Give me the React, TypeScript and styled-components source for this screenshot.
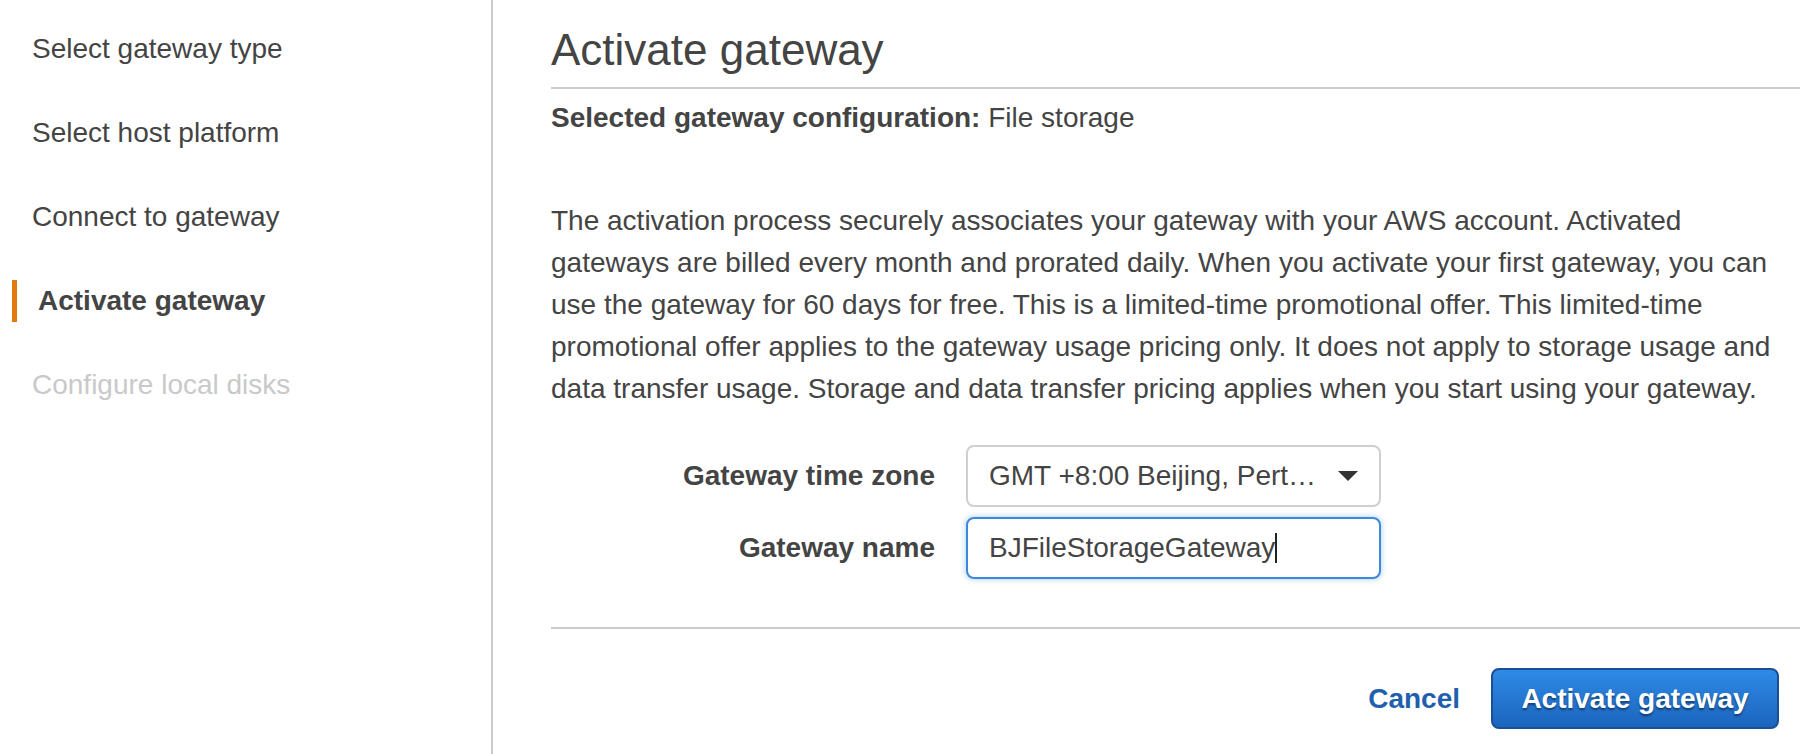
import styled, { createGlobalStyle } from "styled-components";
import { useState } from "react";

const GlobalStyle = createGlobalStyle`
    html, body {
        margin: 0;
        padding: 0;
        background: #fff;
    }
    body {
        font-family: "Liberation Sans", Arial, Helvetica, sans-serif;
        color: #444;
    }
`;

const StyledPage = styled.div`
    display: flex;
    min-height: 754px;
`;

const StyledSidebar = styled.nav`
    width: 493px;
    flex-shrink: 0;
    box-sizing: border-box;
    border-right: 2px solid #cccccc;
    padding-top: 7px;
`;

const StyledStep = styled.div<{ $active?: boolean; $disabled?: boolean }>`
    position: relative;
    height: 84px;
    line-height: 84px;
    font-size: 28px;
    padding-left: ${(props) => (props.$active ? "38px" : "32px")};
    font-weight: ${(props) => (props.$active ? 700 : 400)};
    color: ${(props) => (props.$disabled ? "#c9c9c9" : "#444")};

    &::before {
        content: "";
        display: ${(props) => (props.$active ? "block" : "none")};
        position: absolute;
        left: 12px;
        top: 21px;
        width: 5px;
        height: 42px;
        background: #e27a0f;
    }
`;

const StyledMain = styled.main`
    flex: 1;
    padding: 23px 10px 0 58px;
    min-width: 0;
`;

const StyledTitle = styled.h1`
    margin: 0;
    font-size: 44px;
    font-weight: 400;
    line-height: 53px;
    color: #444;
`;

const StyledRule = styled.hr<{ $top: number }>`
    margin: ${(props) => props.$top}px 0 0 0;
    border: none;
    height: 2px;
    background: #cccccc;
`;

const StyledConfig = styled.p`
    margin: 8px 0 0 0;
    font-size: 28px;
    line-height: 42px;

    b {
        font-weight: 700;
    }
`;

const StyledText = styled.p`
    margin: 61px 0 0 0;
    font-size: 28px;
    line-height: 42px;
`;

const StyledForm = styled.div`
    display: grid;
    grid-template-columns: 384px 415px;
    column-gap: 31px;
    row-gap: 10px;
    align-items: center;
    margin-top: 35px;
`;

const StyledLabel = styled.label`
    text-align: right;
    font-size: 28px;
    font-weight: 700;
    color: #444;
`;

const StyledSelect = styled.div`
    box-sizing: border-box;
    height: 62px;
    display: flex;
    align-items: center;
    justify-content: space-between;
    padding: 0 21px 0 21px;
    border: 2px solid #cfcfcf;
    border-radius: 8px;
    background: #fff;
    font-size: 28px;
    color: #444;
    white-space: nowrap;
`;

const StyledInputWrap = styled.div`
    position: relative;
`;

const StyledInput = styled.input`
    box-sizing: border-box;
    display: block;
    height: 62px;
    width: 100%;
    padding: 0 21px;
    border: 2px solid #3b8ad9;
    border-radius: 8px;
    box-shadow: 0 0 6px rgba(59, 138, 217, 0.45);
    outline: none;
    font-family: "Liberation Sans", Arial, Helvetica, sans-serif;
    font-size: 28px;
    color: #444;
    caret-color: transparent;
`;

// text caret drawn over the field, since the page is not focused when photographed
const StyledCaret = styled.span`
    position: absolute;
    left: 309px;
    top: 16px;
    width: 2px;
    height: 30px;
    background: #222;
    pointer-events: none;
`;

const StyledActions = styled.div`
    display: flex;
    justify-content: flex-end;
    align-items: center;
    gap: 31px;
    margin-top: 39px;
    padding-right: 21px;
`;

const StyledCancel = styled.a`
    font-size: 28px;
    font-weight: 700;
    color: #1f5fae;
    text-decoration: none;
    cursor: pointer;
`;

const StyledPrimary = styled.button`
    box-sizing: border-box;
    height: 61px;
    width: 288px;
    border: 2px solid #1b4f93;
    border-radius: 8px;
    background: linear-gradient(#2f8ae6, #1b64bd);
    color: #fff;
    font-family: "Liberation Sans", Arial, Helvetica, sans-serif;
    font-size: 28px;
    font-weight: 700;
    text-shadow: 0 2px 2px rgba(0, 0, 0, 0.45);
    cursor: pointer;
`;

const steps = [
    { label: "Select gateway type" },
    { label: "Select host platform" },
    { label: "Connect to gateway" },
    { label: "Activate gateway", active: true },
    { label: "Configure local disks", disabled: true },
];

export default function App() {
    const [name, setName] = useState("BJFileStorageGateway");

    return (
        <StyledPage>
            <GlobalStyle />
            <StyledSidebar>
                {steps.map((step) => (
                    <StyledStep key={step.label} $active={step.active} $disabled={step.disabled}>
                        {step.label}
                    </StyledStep>
                ))}
            </StyledSidebar>

            <StyledMain>
                <StyledTitle>Activate gateway</StyledTitle>
                <StyledRule $top={11} />
                <StyledConfig>
                    <b>Selected gateway configuration:</b> File storage
                </StyledConfig>

                <StyledText>
                    The activation process securely associates your gateway with your AWS account. Activated
                    gateways are billed every month and prorated daily. When you activate your first gateway, you can
                    use the gateway for 60 days for free. This is a limited-time promotional offer. This limited-time
                    promotional offer applies to the gateway usage pricing only. It does not apply to storage usage and
                    data transfer usage. Storage and data transfer pricing applies when you start using your gateway.
                </StyledText>

                <StyledForm>
                    <StyledLabel>Gateway time zone</StyledLabel>
                    <StyledSelect>
                        <span>GMT +8:00 Beijing, Pert…</span>
                        <svg width="20" height="10" viewBox="0 0 20 10">
                            <path d="M0 0 L20 0 L10 10 Z" fill="#333" />
                        </svg>
                    </StyledSelect>

                    <StyledLabel htmlFor="gateway-name">Gateway name</StyledLabel>
                    <StyledInputWrap>
                        <StyledInput
                            id="gateway-name"
                            type="text"
                            value={name}
                            onChange={(e) => setName(e.target.value)}
                        />
                        <StyledCaret />
                    </StyledInputWrap>
                </StyledForm>

                <StyledRule $top={48} />

                <StyledActions>
                    <StyledCancel>Cancel</StyledCancel>
                    <StyledPrimary>Activate gateway</StyledPrimary>
                </StyledActions>
            </StyledMain>
        </StyledPage>
    );
}
